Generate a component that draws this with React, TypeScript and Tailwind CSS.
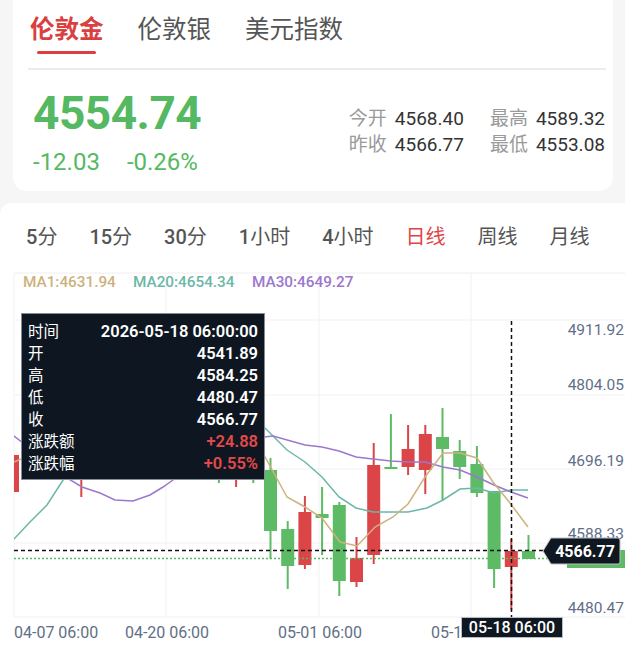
import React from 'react'

const RED = '#db4547'
const GREEN = '#5dbb66'

// [color, bodyTop, bodyBottom, wickTop, wickBottom] in page pixels
const candles: [string, number, number, number, number][] = [
  ['r', 455, 492, 450, 498],
  ['g', 420, 450, 410, 460],
  ['r', 400, 430, 395, 440],
  ['g', 410, 440, 400, 450],
  ['r', 440, 470, 430, 497],
  ['g', 430, 460, 420, 470],
  ['r', 400, 440, 390, 450],
  ['g', 380, 420, 370, 430],
  ['r', 390, 410, 380, 420],
  ['g', 400, 430, 390, 440],
  ['g', 420, 450, 410, 480],
  ['r', 410, 440, 400, 450],
  ['g', 430, 460, 420, 483],
  ['r', 440, 470, 430, 487],
  ['g', 440, 465, 430, 483],
  ['g', 470, 531, 458, 559],
  ['g', 529, 566, 521, 589],
  ['r', 512, 565, 496, 569],
  ['g', 514, 518, 487, 555],
  ['g', 505, 581, 502, 596],
  ['r', 558, 582, 537, 587],
  ['r', 465, 555, 443, 564],
  ['g', 467, 469, 414, 469],
  ['r', 449, 467, 425, 475],
  ['r', 434, 470, 425, 494],
  ['g', 437, 449, 408, 501],
  ['g', 451, 467, 440, 479],
  ['g', 464, 493, 446, 497],
  ['g', 491, 569, 491, 588],
  ['r', 551, 567, 539, 610],
  ['g', 551, 559, 535, 559],
]

const maTan = '14,462 30,455 80,430 140,410 200,420 240,440 264,455 287,497 305,507 322,518 340,542 357,546 375,527 393,517 408,504 425,477 443,453 460,453 477,458 493,482 510,503 528,527'
const maTeal = '14,539 30,522 47,505 65,477 90,450 150,400 200,390 240,405 264,427 287,450 305,462 322,477 339,497 356,508 373,512 391,512 408,512 427,508 443,500 460,489 477,488 494,493 511,490 528,490'
const maPurple = '14,436 40,456 67,478 82,487 100,493 115,500 133,501 150,495 163,487 173,480 200,460 240,440 264,437 273,436 305,445 322,447 339,451 356,457 373,459 391,461 408,462 425,462 443,467 460,470 477,477 494,485 511,492 528,498'

const periods: [string, string][] = [
  ['5', '分'], ['15', '分'], ['30', '分'], ['1', '小时'], ['4', '小时'], ['', '日线'], ['', '周线'], ['', '月线'],
]

const tipRows: [string, string, boolean][] = [
  ['时间', '2026-05-18 06:00:00', false],
  ['开', '4541.89', false],
  ['高', '4584.25', false],
  ['低', '4480.47', false],
  ['收', '4566.77', false],
  ['涨跌额', '+24.88', true],
  ['涨跌幅', '+0.55%', true],
]

function Chart() {
  const gridY = [320, 395, 469, 543, 617]
  const gridX = [166, 319, 471]
  const axis = [
    ['4911.92', 329],
    ['4804.05', 384],
    ['4696.19', 460],
    ['4588.33', 533],
    ['4480.47', 607],
  ] as const

  return (
    <div className="relative h-[383px]">
      <svg width={625} height={383} viewBox="0 265 625 383" className="block">
        <defs>
          <clipPath id="plot">
            <rect x={14} y={273} width={551} height={344} />
          </clipPath>
        </defs>
        {/* grid */}
        <line x1={14} y1={273} x2={625} y2={273} stroke="#eeeeee" strokeWidth={1} />
        {gridY.map(y => (
          <line key={y} x1={14} y1={y} x2={625} y2={y} stroke="#f1f1f1" strokeWidth={1} />
        ))}
        <line x1={14} y1={273} x2={14} y2={617} stroke="#f1f1f1" strokeWidth={1} />
        {gridX.map(x => (
          <line key={x} x1={x} y1={273} x2={x} y2={617} stroke="#f1f1f1" strokeWidth={1} />
        ))}

        {/* legend */}
        <text x={23} y={287} fontSize={15.3} fill="#cdb27e" fontWeight={500}>MA1:4631.94</text>
        <text x={133} y={287} fontSize={15.3} fill="#6cb7a8" fontWeight={500}>MA20:4654.34</text>
        <text x={252} y={287} fontSize={15.3} fill="#9c77cf" fontWeight={500}>MA30:4649.27</text>

        {/* candles */}
        <g clipPath="url(#plot)">
          {candles.map(([c, bt, bb, wt, wb], i) => {
            const left = 6 + i * 17.2
            const col = c === 'r' ? RED : GREEN
            return (
              <g key={i}>
                <rect x={left + 5.5} y={wt} width={2} height={wb - wt} fill={col} />
                <rect x={left} y={bt} width={13} height={Math.max(bb - bt, 2)} fill={col} />
              </g>
            )
          })}
          <polyline points={maTeal} fill="none" stroke="#6cb7a8" strokeWidth={1.5} />
          <polyline points={maPurple} fill="none" stroke="#9c77cf" strokeWidth={1.5} />
          <polyline points={maTan} fill="none" stroke="#cdb27e" strokeWidth={1.5} />
        </g>

        {/* last price line */}
        <line x1={14} y1={558.5} x2={567} y2={558.5} stroke={GREEN} strokeWidth={1.5} strokeDasharray="2 2" />
        <rect x={567} y={550} width={60} height={18} fill={GREEN} />

        {/* axis labels */}
        {axis.map(([t, y]) => (
          <text key={t} x={624} y={y + 5.5} fontSize={15.5} fill="#5f6f88" textAnchor="end">{t}</text>
        ))}
        <text x={14} y={638} fontSize={16} fill="#5f6f88">04-07 06:00</text>
        <text x={167} y={638} fontSize={16} fill="#5f6f88" textAnchor="middle">04-20 06:00</text>
        <text x={320} y={638} fontSize={16} fill="#5f6f88" textAnchor="middle">05-01 06:00</text>
        <text x={473} y={638} fontSize={16} fill="#5f6f88" textAnchor="middle">05-11 06:00</text>

        {/* crosshair */}
        <line x1={14} y1={550.5} x2={545} y2={550.5} stroke="#111" strokeWidth={1.5} strokeDasharray="4 3" />
        <line x1={511.5} y1={321} x2={511.5} y2={617} stroke="#111" strokeWidth={1.5} strokeDasharray="4 3" />
        <path d="M543 551 L551 538 L618 538 Q620 538 620 540 L620 562 Q620 564 618 564 L551 564 Z" fill="#0f1720" stroke="#b9bec6" strokeWidth={1} />
        <text x={585} y={557} fontSize={16} fill="#fff" fontWeight={700} textAnchor="middle">4566.77</text>
        <rect x={461.5} y={617.5} width={101} height={20} fill="#0f1720" stroke="#b9bec6" strokeWidth={1} />
        <text x={512} y={633} fontSize={16} fill="#fff" fontWeight={500} textAnchor="middle">05-18 06:00</text>
      </svg>

      {/* tooltip */}
      <div className="absolute left-[21px] top-[48px] w-[244px] h-[167px] bg-[#0e1721] border border-[#858c96] px-[6px] pt-[7px] flex flex-col">
        {tipRows.map(([k, v, red]) => (
          <div key={k} className="flex justify-between items-center h-[22px] leading-[22px]">
            <span className="text-white text-[15.5px]">{k}</span>
            <span className={`text-[16.5px] font-semibold ${red ? 'text-[#e2494b]' : 'text-white'}`}>{v}</span>
          </div>
        ))}
      </div>
    </div>
  )
}

function Stat({ label, value }: { label: string; value: string }) {
  return (
    <div className="flex gap-[8px]">
      <span className="text-[#9a9a9a]">{label}</span>
      <span className="text-[#333]">{value}</span>
    </div>
  )
}

export default function App() {
  return (
    <div className="w-[625px] h-[648px] overflow-hidden bg-[#f6f6f6] font-['Roboto','Noto_Sans_CJK_SC',sans-serif] flex flex-col">
      {/* Quote card */}
      <div className="ml-[13px] mr-[12px] h-[191px] bg-white rounded-b-[14px] flex flex-col">
        <div className="h-[68px] flex items-start gap-[34px] pl-[17px] pt-[14px]">
          <div className="flex flex-col items-center">
            <span className="text-[24.5px] leading-[32px] font-bold text-[#d9403f]">伦敦金</span>
            <span className="mt-[5px] w-[59px] h-[3px] rounded-full bg-[#d9403f]" />
          </div>
          <span className="text-[24.5px] leading-[32px] text-[#555]">伦敦银</span>
          <span className="text-[24.5px] leading-[32px] text-[#555]">美元指数</span>
        </div>
        <div className="ml-[15px] mr-[7px] h-[2px] bg-[#ececec]" />
        <div className="flex justify-between pl-[20px] pr-[8px] pt-[19px]">
          <div className="flex flex-col">
            <span className="text-[46px] leading-[48px] font-bold text-[#55b862] tracking-[-0.5px]">4554.74</span>
            <div className="flex gap-[27px] mt-[11px] text-[24px] leading-[28px] text-[#55b862]">
              <span>-12.03</span>
              <span>-0.26%</span>
            </div>
          </div>
          <div className="grid grid-cols-[auto_auto] gap-x-[26px] mt-[17px] text-[19px] leading-[26px] h-fit">
            <Stat label="今开" value="4568.40" />
            <Stat label="最高" value="4589.32" />
            <Stat label="昨收" value="4566.77" />
            <Stat label="最低" value="4553.08" />
          </div>
        </div>
      </div>

      {/* Chart card */}
      <div className="mt-[12px] flex-1 bg-white rounded-tl-[12px] flex flex-col">
        <div className="h-[62px] flex items-center gap-[32px] pl-[26px] pt-[6px] text-[20px]">
          {periods.map(([n, t]) => (
            <span key={n + t} className={t === '日线' ? 'text-[#e04545]' : 'text-[#555]'}>
              {n && <span className="font-medium">{n}</span>}
              {t}
            </span>
          ))}
        </div>
        <Chart />
      </div>
    </div>
  )
}
